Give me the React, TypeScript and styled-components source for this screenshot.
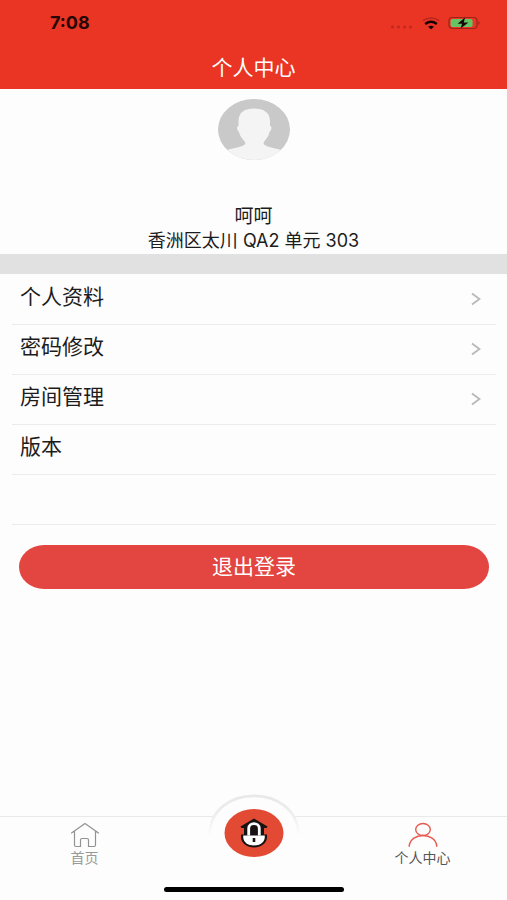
import React from 'react';
import styled, { createGlobalStyle } from 'styled-components';

const GlobalStyle = createGlobalStyle`
  *, *::before, *::after { box-sizing: border-box; }
  html, body, #root { height: 100%; }
  body {
    margin: 0;
    background: #fdfdfd;
    color: #1c1c1c;
    font-family: Inter, "Noto Sans CJK SC", sans-serif;
  }
`;

const Screen = styled.div`
  display: flex;
  flex-direction: column;
  min-height: 100%;
`;

const Header = styled.header`
  background: #ea3424;
`;

const StatusBar = styled.div`
  display: flex;
  align-items: center;
  justify-content: space-between;
  height: 46px;
  padding: 0 26px 0 50px;
`;

const Clock = styled.time`
  color: #250604;
  font-size: 18px;
  font-weight: 700;
  line-height: 20px;
`;

const StatusIcons = styled.div`
  display: flex;
  align-items: center;
  gap: 8px;

  svg { display: block; }
`;

const Title = styled.h1`
  margin: 0;
  height: 43px;
  color: #fff;
  font-size: 21px;
  font-weight: 400;
  line-height: 43px;
  text-align: center;
`;

const Profile = styled.section`
  display: flex;
  flex-direction: column;
  align-items: center;
  padding: 10px 0 1px;
  border-bottom: 20px solid #e1e1e1;
`;

const Avatar = styled.svg`
  display: block;
  margin-bottom: 45px;
`;

const ProfileLine = styled.p<{ $size: number }>`
  margin: 0;
  font-size: ${({ $size }) => $size}px;
  line-height: 24px;
`;

const Menu = styled.ul`
  margin: 0;
  padding: 1px 11px 0 12px;
  list-style: none;
`;

const MenuItem = styled.li`
  height: 50px;
  border-bottom: 1px solid #ececec;
`;

const MenuButton = styled.button`
  display: flex;
  align-items: center;
  justify-content: space-between;
  width: 100%;
  height: 48px;
  padding: 0 15px 0 8px;
  border: 0;
  background: none;
  color: inherit;
  font: inherit;
  cursor: pointer;
`;

const MenuLabel = styled.span`
  padding-bottom: 4px;
  font-size: 21px;
  line-height: 28px;
`;

const LogoutButton = styled.button`
  margin: 20px 18px 0 19px;
  height: 44px;
  padding: 0;
  border: 0;
  border-radius: 25px / 22px;
  background: #e34541;
  color: #fff;
  font: inherit;
  font-size: 21px;
  line-height: 44px;
  cursor: pointer;
`;

const Footer = styled.footer`
  margin-top: auto;
`;

const TabBar = styled.nav`
  display: grid;
  grid-template-columns: 1fr 1fr 1fr;
  height: 68px;
  border-top: 1px solid #e9e9e9;
`;

const Tab = styled.a<{ $active?: boolean }>`
  display: flex;
  flex-direction: column;
  align-items: center;
  padding-top: 5px;
  color: ${({ $active }) => ($active ? '#555' : '#999')};
  font-size: 14px;
  line-height: 18px;
  text-decoration: none;

  svg { display: block; margin-bottom: 1px; }
`;

const UnlockButton = styled.button`
  justify-self: center;
  height: 68px;
  margin-top: -24px;
  padding: 0;
  border: 0;
  background: none;
  cursor: pointer;

  svg { display: block; }
`;

const HomeIndicator = styled.div`
  width: 180px;
  height: 5px;
  margin: 3px auto 8px;
  border-radius: 3px;
  background: #000;
`;

const Signal = () => (
  <svg width="24" height="16" viewBox="0 0 24 16" fill="#bd2a1f" aria-hidden="true">
    <circle cx="2.5" cy="12" r="1.5" />
    <circle cx="8.5" cy="12" r="1.5" />
    <circle cx="14.5" cy="12" r="1.5" />
    <circle cx="20.5" cy="12" r="1.5" />
  </svg>
);

const Wifi = () => (
  <svg width="18" height="14" viewBox="0 0 18 14" fill="none" aria-hidden="true">
    <path d="M1 4.6Q9-.6 17 4.6" stroke="#b3271d" strokeWidth="1.5" />
    <path d="M3.2 8Q9 3.6 14.8 8" stroke="#190302" strokeWidth="2.5" />
    <path d="M6 10.8Q9 8.6 12 10.8L9 13.2Z" fill="#190302" />
  </svg>
);

const Battery = () => (
  <svg width="33" height="14" viewBox="0 0 33 14" aria-hidden="true">
    <rect x="1" y="1.5" width="28" height="11" rx="3.5" fill="none" stroke="#9c241a" strokeWidth="1.2" />
    <rect x="2.6" y="3" width="22" height="8" rx="1.8" fill="#65c466" />
    <path d="M30.5 5Q32.6 7 30.5 9Z" fill="#8f2018" />
    <path d="M17 1.6L9.6 7.7H14L12.6 12.6L20.4 6.4H15.8Z" fill="#170604" />
  </svg>
);

const Chevron = () => (
  <svg width="10" height="14" viewBox="0 0 10 14" fill="none" aria-hidden="true">
    <path d="M1 1.5L8.5 7L1 12.5" stroke="#b9b9b9" strokeWidth="1.9" />
  </svg>
);

const HouseIcon = () => (
  <svg width="30" height="26" viewBox="0 0 30 26" fill="none" stroke="#929292" strokeWidth="1.2" strokeLinejoin="round" strokeLinecap="round" aria-hidden="true">
    <path d="M1.5 11L15 1.5L28.5 11M4.5 9V23Q4.5 24.5 6 24.5H10.5V18Q10.5 16.5 12 16.5H17Q18.5 16.5 18.5 18V24.5H24Q25.5 24.5 25.5 23V9" />
  </svg>
);

const PersonIcon = () => (
  <svg width="30" height="26" viewBox="0 0 30 26" fill="none" stroke="#e65a4d" strokeWidth="1.4" strokeLinecap="round" aria-hidden="true">
    <ellipse cx="15" cy="7.5" rx="7.3" ry="6" />
    <path d="M1.2 24.3C2.5 9.8 27.5 9.8 28.8 24.3" />
  </svg>
);

const UnlockIcon = () => (
  <svg width="94" height="68" viewBox="0 0 94 68" aria-hidden="true">
    <defs>
      <linearGradient id="rim" x1="0" y1="0" x2="0" y2="1">
        <stop offset="0" stopColor="#e8e8e8" />
        <stop offset=".5" stopColor="#efefef" />
        <stop offset="1" stopColor="#fdfdfd" />
      </linearGradient>
    </defs>
    <path d="M2 42C2-10 92-10 92 42V44H2Z" fill="#fdfdfd" />
    <path d="M2.5 43C2.5-10.5 91.5-10.5 91.5 43" fill="none" stroke="url(#rim)" strokeWidth="2.8" />
    <ellipse cx="47" cy="40" rx="29.5" ry="24" fill="#e24a34" />
    <path d="M47 25.5L60.5 33.5L59.5 35H57V42H37V35H34.5L33.5 33.5Z" fill="#171312" />
    <path d="M34 41.5H60V44C60 50 54 54.5 47 54.5S34 50 34 44Z" fill="#171312" />
    <path d="M36.2 42.5H57.8V44C57.8 49 53 52.5 47 52.5S36.2 49 36.2 44Z" fill="#fff" />
    <path d="M41.7 42.5V35.5C41.7 29 52.3 29 52.3 35.5V42.5" fill="none" stroke="#fff" strokeWidth="2.8" />
    <path d="M45.7 45H48.3V49H45.7Z" fill="#171312" />
  </svg>
);

const menu = [
  { label: '个人资料', link: true },
  { label: '密码修改', link: true },
  { label: '房间管理', link: true },
  { label: '版本', link: false },
];

export default function App() {
  return (
    <Screen>
      <GlobalStyle />
      <Header>
        <StatusBar>
          <Clock>7:08</Clock>
          <StatusIcons>
            <Signal />
            <Wifi />
            <Battery />
          </StatusIcons>
        </StatusBar>
        <Title>个人中心</Title>
      </Header>
      <main>
        <Profile>
          <Avatar width="72" height="61" viewBox="0 0 72 61" aria-hidden="true">
            <defs>
              <clipPath id="avatar">
                <ellipse cx="36" cy="30.5" rx="36" ry="30.5" />
              </clipPath>
            </defs>
            <g clipPath="url(#avatar)">
              <rect width="72" height="61" fill="#c9c9c9" />
              <path d="M20.5 22C20.5 13 27 9.5 36 9.5S52 13 52 22V27C54 27 54 31 51.5 33C50.5 38 47 41 45.5 44C45.5 48 55 48 64 51.5V61H8V51.5C17 48 27.5 48 27.5 44C26 41 22 38 21 33C18.5 31 18.5 27 20.5 27Z" fill="#f4f4f4" />
            </g>
          </Avatar>
          <ProfileLine $size={19}>呵呵</ProfileLine>
          <ProfileLine $size={18}>香洲区太川 QA2 单元 303</ProfileLine>
        </Profile>
        <Menu>
          {menu.map(({ label, link }) => (
            <MenuItem key={label}>
              <MenuButton type="button">
                <MenuLabel>{label}</MenuLabel>
                {link && <Chevron />}
              </MenuButton>
            </MenuItem>
          ))}
          <MenuItem aria-hidden="true" />
        </Menu>
      </main>
      <LogoutButton type="button">退出登录</LogoutButton>
      <Footer>
        <TabBar>
          <Tab href="#home">
            <HouseIcon />
            首页
          </Tab>
          <UnlockButton type="button" aria-label="开锁">
            <UnlockIcon />
          </UnlockButton>
          <Tab href="#me" $active aria-current="page">
            <PersonIcon />
            个人中心
          </Tab>
        </TabBar>
        <HomeIndicator />
      </Footer>
    </Screen>
  );
}
